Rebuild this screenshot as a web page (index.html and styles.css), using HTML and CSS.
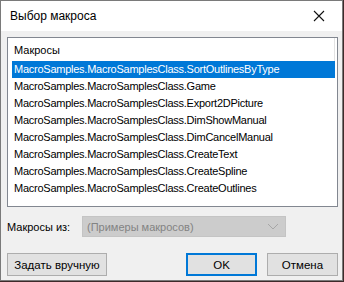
FILE: index.html
```html
<!DOCTYPE html>
<html lang="ru">
<head>
    <meta charset="utf-8">
    <link rel="stylesheet" href="styles.css">
</head>
<body>
    <div class="window">
        <div class="titlebar">
            <span class="title">Выбор макроса</span>
            <button class="close">
                <svg width="12" height="12" viewBox="0 0 12 12">
                    <path d="M1 1L11 11M11 1L1 11" stroke="#111" stroke-width="1.1" fill="none"/>
                </svg>
            </button>
        </div>
        <div class="content">
            <div class="listbox">
                <div class="list-header">Макросы</div>
                <div class="row selected">MacroSamples.MacroSamplesClass.SortOutlinesByType</div>
                <div class="row">MacroSamples.MacroSamplesClass.Game</div>
                <div class="row">MacroSamples.MacroSamplesClass.Export2DPicture</div>
                <div class="row">MacroSamples.MacroSamplesClass.DimShowManual</div>
                <div class="row">MacroSamples.MacroSamplesClass.DimCancelManual</div>
                <div class="row">MacroSamples.MacroSamplesClass.CreateText</div>
                <div class="row">MacroSamples.MacroSamplesClass.CreateSpline</div>
                <div class="row">MacroSamples.MacroSamplesClass.CreateOutlines</div>
            </div>
            <div class="source">
                <span class="source-label">Макросы из:</span>
                <div class="combo">
                    <span>(Примеры макросов)</span>
                    <svg width="12" height="7" viewBox="0 0 12 7">
                        <path d="M1 1L6 6L11 1" stroke="#a6a6a6" stroke-width="1" fill="none"/>
                    </svg>
                </div>
            </div>
            <div class="buttons">
                <button class="btn btn-manual">Задать вручную</button>
                <div class="btn-group">
                    <button class="btn btn-ok">OK</button>
                    <button class="btn">Отмена</button>
                </div>
            </div>
        </div>
    </div>
</body>
</html>
```

FILE: styles.css
```css
*{
    box-sizing: border-box;
    font-family: 'Liberation Sans', Arial, sans-serif;
}
body{
    margin: 0;
    background: #3d2a2a;
}
.window{
    width: 343px;
    height: 281px;
    background: #f0f0f0;
    border: 1px solid #7a7a7a;
    display: flex;
    flex-direction: column;
}
.titlebar{
    height: 30px;
    background: #fff;
    display: flex;
    align-items: center;
    justify-content: space-between;
    padding-left: 9px;
}
.title{
    font-size: 12px;
    color: #000;
}
.close{
    width: 46px;
    height: 30px;
    border: none;
    background: transparent;
    display: flex;
    align-items: center;
    justify-content: center;
    padding: 0;
}
.content{
    padding: 6px 4px 0 6px;
}
.listbox{
    height: 170px;
    background: #fff;
    border: 1px solid #828790;
    padding: 0 2px 0 4px;
    font-size: 11px;
}
.list-header{
    height: 23px;
    line-height: 25px;
    padding-left: 2px;
    border-right: 1px solid #e3e3e3;
    color: #000;
}
.row{
    height: 17px;
    line-height: 17px;
    padding-left: 2px;
    color: #000;
    white-space: nowrap;
    letter-spacing: -0.25px;
}
.row.selected{
    background: #0078d7;
    color: #fff;
}
.source{
    display: flex;
    align-items: center;
    margin-top: 9px;
    height: 21px;
}
.source-label{
    width: 75px;
    font-size: 11px;
    color: #000;
}
.combo{
    width: 204px;
    height: 21px;
    background: #cccccc;
    border: 1px solid #c4c4c4;
    display: flex;
    align-items: center;
    justify-content: space-between;
    padding: 0 6px 0 4px;
    font-size: 11px;
    color: #838383;
}
.buttons{
    display: flex;
    justify-content: space-between;
    margin-top: 16px;
}
.btn-group{
    display: flex;
    gap: 10px;
}
.btn{
    width: 71px;
    height: 23px;
    background: #e1e1e1;
    border: 1px solid #adadad;
    font-size: 11.5px;
    color: #000;
    padding: 0;
}
.btn-manual{
    width: 100px;
}
.btn-ok{
    border: 2px solid #0078d7;
}
```
